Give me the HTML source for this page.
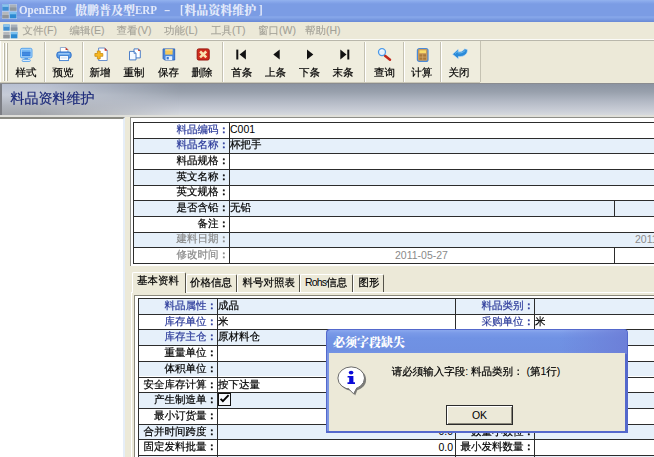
<!DOCTYPE html>
<html><head><meta charset="utf-8"><title>OpenERP</title>
<style>
html,body{margin:0;padding:0;}
body{width:654px;height:457px;overflow:hidden;background:#ece9d8;position:relative;font-family:"Liberation Sans", "WenQuanYi Zen Hei", "Noto Sans CJK SC", sans-serif;font-size:10.5px;color:#000;-webkit-text-stroke:0.2px currentColor;}
div,span{position:absolute;box-sizing:border-box;white-space:nowrap;}
.t{line-height:12px;}
.req{color:#2b3a9a;} .dis{color:#8a8a8a;}
.lab{text-align:right;}
.lat{-webkit-text-stroke:0;font-size:10.5px;}
.hl{background:#2c2c2c;height:1px;}
.vl{background:#2c2c2c;width:1px;}
.tb{font-size:10.5px;text-align:center;width:40px;top:65.5px;line-height:12px;}
.sep{top:42px;height:40px;width:2px;border-left:1px solid #c5c2b2;border-right:1px solid #fff;}
.mi{top:24px;color:#a3a197;-webkit-text-stroke:0.1px #a3a197;line-height:12px;font-size:10.5px;}
</style></head><body>

<div style="left:0;top:0;width:654px;height:21.5px;background:linear-gradient(#93b2ee 0,#86a6ea 2px,#7b9ce4 4px,#7b9ce4 15.5px,#88a8ea 17px,#7e9fe4 18.5px,#6c8cd8 21.5px);"></div>
<div style="left:18.8px;top:3.2px;color:#e2e9fa;font-weight:bold;font-family:'Liberation Serif','Noto Serif CJK SC',serif;-webkit-text-stroke:0;font-size:12px;line-height:14px;transform:scaleX(0.92);transform-origin:0 0;">OpenERP</div>
<div style="left:75.0px;top:4px;color:#e2e9fa;font-weight:bold;font-family:'Liberation Serif','Noto Serif CJK SC',serif;-webkit-text-stroke:0;font-size:12px;line-height:14px;font-weight:900;">傲鹏普及型</div>
<div style="left:135.4px;top:3.2px;color:#e2e9fa;font-weight:bold;font-family:'Liberation Serif','Noto Serif CJK SC',serif;-webkit-text-stroke:0;font-size:12px;line-height:14px;transform:scaleX(0.92);transform-origin:0 0;">ERP</div>
<div style="left:164.2px;top:3.2px;color:#e2e9fa;font-weight:bold;font-family:'Liberation Serif','Noto Serif CJK SC',serif;-webkit-text-stroke:0;font-size:12px;line-height:14px;transform:scaleX(1.60);transform-origin:0 0;">-</div>
<div style="left:180.0px;top:3.2px;color:#e2e9fa;font-weight:bold;font-family:'Liberation Serif','Noto Serif CJK SC',serif;-webkit-text-stroke:0;font-size:12px;line-height:14px;transform:scaleX(0.92);transform-origin:0 0;">[</div>
<div style="left:184.3px;top:4px;color:#e2e9fa;font-weight:bold;font-family:'Liberation Serif','Noto Serif CJK SC',serif;-webkit-text-stroke:0;font-size:12px;line-height:14px;font-weight:900;">料品资料维护</div>
<div style="left:258.6px;top:3.2px;color:#e2e9fa;font-weight:bold;font-family:'Liberation Serif','Noto Serif CJK SC',serif;-webkit-text-stroke:0;font-size:12px;line-height:14px;transform:scaleX(0.92);transform-origin:0 0;">]</div>
<svg style="position:absolute;left:1.5px;top:3.5px" width="15" height="15" viewBox="0 0 15 15"><rect x="0" y="0" width="15" height="15" fill="#e8eef8" opacity="0.55"/><rect x="0.3" y="0.5" width="6.4" height="6.2" fill="#3f8fd2"/><rect x="0.3" y="0.5" width="6.4" height="2.4" fill="#8cc4ec"/><rect x="7.8" y="0.5" width="6.6" height="6.2" fill="#a9b1ba"/><rect x="7.8" y="3.4" width="6.600" height="3.300" fill="#8d969f"/><rect x="0.3" y="7.900" width="6.400" height="6.400" fill="#b4b8bc"/><rect x="0.3" y="11" width="6.400" height="3.300" fill="#8f9499"/><rect x="7.800" y="7.900" width="6.600" height="6.400" fill="#2c8ad2"/><rect x="7.800" y="7.900" width="6.600" height="2.400" fill="#7cc0ee"/></svg>
<div style="left:0;top:21.5px;width:654px;height:19px;background:#ece9d8;"></div>
<div style="left:0;top:38.5px;width:654px;height:1.2px;background:#fbfbf8;"></div>
<div style="left:0;top:39.7px;width:654px;height:0.9px;background:#b9b7ab;"></div>
<svg style="position:absolute;left:3.0px;top:24.0px" width="15" height="15" viewBox="0 0 15 15"><rect x="0" y="0" width="15" height="15" fill="#e8eef8" opacity="0.55"/><rect x="0.3" y="0.5" width="6.4" height="6.2" fill="#3f8fd2"/><rect x="0.3" y="0.5" width="6.4" height="2.4" fill="#8cc4ec"/><rect x="7.8" y="0.5" width="6.6" height="6.2" fill="#a9b1ba"/><rect x="7.8" y="3.4" width="6.600" height="3.300" fill="#8d969f"/><rect x="0.3" y="7.900" width="6.400" height="6.400" fill="#b4b8bc"/><rect x="0.3" y="11" width="6.400" height="3.300" fill="#8f9499"/><rect x="7.800" y="7.900" width="6.600" height="6.400" fill="#2c8ad2"/><rect x="7.800" y="7.900" width="6.600" height="2.400" fill="#7cc0ee"/></svg>
<div class="mi" style="left:22.5px">文件(F)</div>
<div class="mi" style="left:69.5px">编辑(E)</div>
<div class="mi" style="left:116.5px">查看(V)</div>
<div class="mi" style="left:164.0px">功能(L)</div>
<div class="mi" style="left:211.0px">工具(T)</div>
<div class="mi" style="left:258.0px">窗口(W)</div>
<div class="mi" style="left:305.0px">帮助(H)</div>
<div style="left:0;top:40.6px;width:654px;height:43px;background:#ece9d8;"></div>
<div style="left:0;top:40.6px;width:480.5px;height:41px;background:#efedde;border-right:1px solid #c5c2b2;"></div>
<div style="left:0;top:41px;width:1px;height:41px;background:#fdfdfb;"></div>
<div style="left:3px;top:42.5px;width:2px;height:38px;border-left:1px solid #fff;border-right:1px solid #b9b6a6;"></div>
<div style="left:6px;top:42.5px;width:2px;height:38px;border-left:1px solid #fff;border-right:1px solid #b9b6a6;"></div>
<div class="sep" style="left:44px"></div>
<div class="sep" style="left:82px"></div>
<div class="sep" style="left:222px"></div>
<div class="sep" style="left:364px"></div>
<div class="sep" style="left:403px"></div>
<div class="sep" style="left:440px"></div>
<div class="tb" style="left:6.0px">样式</div>
<div class="tb" style="left:43.0px">预览</div>
<div class="tb" style="left:80.0px">新增</div>
<div class="tb" style="left:114.0px">重制</div>
<div class="tb" style="left:148.4px">保存</div>
<div class="tb" style="left:182.0px">删除</div>
<div class="tb" style="left:221.7px">首条</div>
<div class="tb" style="left:255.6px">上条</div>
<div class="tb" style="left:289.6px">下条</div>
<div class="tb" style="left:323.0px">末条</div>
<div class="tb" style="left:364.5px">查询</div>
<div class="tb" style="left:401.8px">计算</div>
<div class="tb" style="left:439.0px">关闭</div>
<svg style="position:absolute;left:0;top:0" width="654" height="90" viewBox="0 0 654 90"><defs><linearGradient id="gs" x1="0" y1="0" x2="0" y2="1"><stop offset="0" stop-color="#7fc0f8"/><stop offset="1" stop-color="#2a78d8"/></linearGradient></defs><g transform="translate(20,47.8)"><rect x="0.5" y="0.5" width="11.5" height="9.6" rx="1.5" fill="#a8d4fa" stroke="#58a4ec"/><rect x="2" y="2" width="8.5" height="6.4" fill="url(#gs)"/><rect x="2" y="4.6" width="8.5" height="0.9" fill="#2a6fd0"/><rect x="4.5" y="10.300" width="3.500" height="1.600" fill="#4a90e0"/><rect x="2.200" y="11.800" width="8.100" height="1.900" rx="0.8" fill="#e4f0fc" stroke="#4a9ae8" stroke-width="0.8"/></g><g transform="translate(56.4,47)"><path d="M4 5.500 V0.500 H9.500 L11.500 2.500 V5.500Z" fill="#fff" stroke="#7a9cc8" stroke-width="0.8"/><path d="M9.200 0.300 L11.800 2.900 L9.200 2.900Z" fill="#c8301c"/><rect x="0.500" y="5" width="14.200" height="6.200" rx="2.200" fill="#5a9ee8" stroke="#2a6cc8"/><rect x="2" y="6.200" width="11" height="1.200" fill="#a8d0f8"/><rect x="3.200" y="8.600" width="8.800" height="5" fill="#fff" stroke="#3a7cd0" stroke-width="0.9"/><rect x="4.500" y="10.500" width="6" height="0.900" fill="#b8d4f0"/></g><g transform="translate(94.6,47.5)"><path d="M4 0.500 H10.300 L12.600 2.800 V13 H4Z" fill="#fff" stroke="#5a86c8" stroke-width="0.9"/><path d="M10 0.300 L12.900 3.200 L10 3.200Z" fill="#c8301c"/><path d="M2.800 3.500 H5.600 V6 H8.200 V8.800 H5.600 V11.400 H2.800 V8.800 H0.300 V6 H2.800Z" fill="#f8b820" stroke="#c88a10" stroke-width="0.8"/></g><g transform="translate(129,48.4)"><path d="M5 0.500 H9.500 L11.300 2.300 V9.500 H5Z" fill="#fff" stroke="#3a72c4" stroke-width="0.9"/><path d="M9.200 0.300 L11.600 2.700 L9.200 2.700Z" fill="#c8301c"/><path d="M0.500 3 H5 L7 5 V11.500 H0.500Z" fill="#f4f9ff" stroke="#3a72c4" stroke-width="0.9"/><path d="M5 3 V5 H7" fill="none" stroke="#3a72c4" stroke-width="0.7"/></g><g transform="translate(162.6,48.4)"><path d="M0.500 0.500 H12.100 V11.600 H2 L0.500 10.100Z" fill="#4a88dc" stroke="#2a5eb8" stroke-width="0.9"/><rect x="2.600" y="0.900" width="7.400" height="5.300" fill="#f4c85a"/><rect x="2.600" y="0.900" width="7.400" height="1.300" fill="#f8e098"/><rect x="3" y="7.800" width="6.600" height="3.800" fill="#e8f2ff"/><rect x="4" y="8.600" width="2.200" height="2.400" fill="#3a78d0"/></g><g transform="translate(196.7,48.4)"><rect x="0.500" y="0.500" width="12" height="11.100" rx="1.500" fill="#d02c1c" stroke="#98140c"/><path d="M3.400 3.100 L9.600 9 M9.600 3.100 L3.400 9" stroke="#fbe2b0" stroke-width="2.500"/></g><g fill="#111"><rect x="236.300" y="49.600" width="2" height="9.900"/><path d="M245.900 49.600 V59.500 L239.600 54.550Z"/><path d="M279.700 49.600 V59.500 L273.300 54.550Z"/><path d="M307 49.600 V59.500 L313.300 54.550Z"/><path d="M340.300 49.600 V59.500 L346.500 54.550Z"/><rect x="347.300" y="49.600" width="2" height="9.900"/></g><path d="M385 55.800 L390 59.800" stroke="#c0281c" stroke-width="2.500" stroke-linecap="round"/><circle cx="382" cy="52.100" r="3.500" fill="#e4f2fe" stroke="#4a98e8" stroke-width="1.300"/><path d="M380.200 51.200 A2.200 2.200 0 0 1 382.600 50" stroke="#fff" stroke-width="0.900" fill="none"/><g transform="translate(416.8,47.9)"><rect x="0.600" y="0.600" width="10.600" height="12.900" rx="2" fill="#c89a5c" stroke="#4a8ad8" stroke-width="1.200"/><rect x="2.600" y="2.400" width="6.600" height="2.800" fill="#f8dc68"/><rect x="2.600" y="6.400" width="2.800" height="5.400" fill="#a87838"/><rect x="6.400" y="6.400" width="2.800" height="5.400" fill="#a87838"/><rect x="2.600" y="8.800" width="6.600" height="0.700" fill="#d8b070"/></g><path d="M452.500 54.200 L458.200 49 L458.400 51.600 C460.500 52.200 463 51.200 464.600 48.800 L467.400 49.400 C468 53.600 464.400 57 458.400 56.600 L458.400 59Z" fill="#2a8ad8" stroke="#d4e6f6" stroke-width="0.600"/><path d="M455 53.600 L457.600 51.200 L458 52.800 C461 53.400 463.600 52.200 465.300 50.400" stroke="#6ab8f0" stroke-width="1" fill="none"/></svg>
<div style="left:0;top:81.5px;width:480px;height:1px;background:#cbc8b8;"></div>
<div style="left:0;top:82.5px;width:654px;height:2px;background:#8a8c90;"></div>
<div style="left:0;top:84px;width:654px;height:30.5px;background:linear-gradient(#8c94a2,#98a0ac 25%,#b2b8c4 55%,#cbcfd8 88%,#d6d9dd);"></div>
<div style="left:0;top:84px;width:190px;height:30.5px;background:linear-gradient(#b8c0d2,#c6ccd8 35%,#b0b4bc 70%,#a2a5aa);-webkit-mask-image:linear-gradient(to right,#000 0,#000 40px,transparent 180px);mask-image:linear-gradient(to right,#000 0,#000 40px,transparent 180px);"></div>
<div style="left:0;top:84px;width:1.5px;height:31px;background:#7c7e84;"></div>
<div style="left:0;top:114.5px;width:654px;height:2.5px;background:#dfdfda;"></div>
<div style="left:10.5px;top:90px;color:#1c2a7a;font-size:14px;line-height:17px;-webkit-text-stroke:0.2px #1c2a7a;">料品资料维护</div>
<div style="left:0;top:116.5px;width:124.8px;height:341px;background:#fff;border-top:2px solid #8a8a82;border-right:2px solid #e6eef8;"></div>
<div style="left:130px;top:117px;width:530px;height:148.800px;border-left:1.5px solid #8e8e88;border-top:1.5px solid #8e8e88;background:#fff;"></div>
<div style="left:133px;top:122.00px;width:530px;height:15.67px;background:#fff;"></div>
<div class="t lab req" style="left:133px;width:96px;top:122.80px;">料品编码<span style="position:static;-webkit-text-stroke:0.55px currentColor">：</span></div>
<div class="t lat" style="left:230px;top:122.80px;">C001</div>
<div style="left:133px;top:137.67px;width:530px;height:15.67px;background:#e6f0fa;"></div>
<div class="t lab req" style="left:133px;width:96px;top:138.47px;">料品名称<span style="position:static;-webkit-text-stroke:0.55px currentColor">：</span></div>
<div class="t" style="left:230px;top:138.47px;">杯把手</div>
<div style="left:133px;top:153.33px;width:530px;height:15.67px;background:#fff;"></div>
<div class="t lab " style="left:133px;width:96px;top:154.13px;">料品规格<span style="position:static;-webkit-text-stroke:0.55px currentColor">：</span></div>
<div style="left:133px;top:169.00px;width:530px;height:15.67px;background:#e6f0fa;"></div>
<div class="t lab " style="left:133px;width:96px;top:169.80px;">英文名称<span style="position:static;-webkit-text-stroke:0.55px currentColor">：</span></div>
<div style="left:133px;top:184.67px;width:530px;height:15.67px;background:#fff;"></div>
<div class="t lab " style="left:133px;width:96px;top:185.47px;">英文规格<span style="position:static;-webkit-text-stroke:0.55px currentColor">：</span></div>
<div style="left:133px;top:200.33px;width:530px;height:15.67px;background:#e6f0fa;"></div>
<div class="t lab " style="left:133px;width:96px;top:201.13px;">是否含铅<span style="position:static;-webkit-text-stroke:0.55px currentColor">：</span></div>
<div class="t" style="left:230px;top:201.13px;">无铅</div>
<div style="left:133px;top:216.00px;width:530px;height:15.67px;background:#fff;"></div>
<div class="t lab " style="left:133px;width:96px;top:216.80px;">备注<span style="position:static;-webkit-text-stroke:0.55px currentColor">：</span></div>
<div style="left:133px;top:231.67px;width:530px;height:15.67px;background:#e6f0fa;"></div>
<div class="t lab dis" style="left:133px;width:96px;top:232.47px;">建料日期<span style="position:static;-webkit-text-stroke:0.55px currentColor">：</span></div>
<div style="left:133px;top:247.34px;width:530px;height:15.67px;background:#fff;"></div>
<div class="t lab dis" style="left:133px;width:96px;top:248.14px;">修改时间<span style="position:static;-webkit-text-stroke:0.55px currentColor">：</span></div>
<div class="hl" style="left:133px;width:530px;top:122.00px"></div>
<div class="hl" style="left:133px;width:530px;top:137.67px"></div>
<div class="hl" style="left:133px;width:530px;top:153.33px"></div>
<div class="hl" style="left:133px;width:530px;top:169.00px"></div>
<div class="hl" style="left:133px;width:530px;top:184.67px"></div>
<div class="hl" style="left:133px;width:530px;top:200.33px"></div>
<div class="hl" style="left:133px;width:530px;top:216.00px"></div>
<div class="hl" style="left:133px;width:530px;top:231.67px"></div>
<div class="hl" style="left:133px;width:530px;top:247.34px"></div>
<div class="hl" style="left:133px;width:530px;top:263.00px"></div>
<div class="vl" style="left:133px;top:122px;height:142.00px"></div>
<div class="vl" style="left:229px;top:122px;height:142.00px"></div>
<div class="vl" style="left:614px;top:200.33px;height:15.67px"></div>
<div class="vl" style="left:614px;top:247.34px;height:15.67px"></div>
<div class="t dis lat" style="left:229px;width:385px;text-align:center;top:248.54px;">2011-05-27</div>
<div class="t dis lat" style="left:635px;top:232.87px;">2011-05-27</div>
<div style="left:130.500px;top:291.500px;width:530px;height:170px;border-top:1px solid #fff;border-left:1px solid #fff;"></div>
<div style="left:132px;top:272px;width:54px;height:21px;background:#ece9d8;border-left:1px solid #fff;border-top:1px solid #fff;border-right:1px solid #55534a;border-radius:2px 2px 0 0;"></div>
<div class="t" style="left:137px;top:274px;">基本资料</div>
<div style="left:186.0px;top:274px;width:51.0px;height:18px;border-left:1px solid #fff;border-top:1px solid #fff;border-right:1px solid #55534a;border-radius:2px 2px 0 0;"></div>
<div class="t" style="left:190.0px;top:275.5px;">价格信息</div>
<div style="left:237.0px;top:274px;width:63.0px;height:18px;border-left:1px solid #fff;border-top:1px solid #fff;border-right:1px solid #55534a;border-radius:2px 2px 0 0;"></div>
<div class="t" style="left:242.5px;top:275.5px;">料号对照表</div>
<div style="left:300.0px;top:274px;width:53.0px;height:18px;border-left:1px solid #fff;border-top:1px solid #fff;border-right:1px solid #55534a;border-radius:2px 2px 0 0;"></div>
<div class="t" style="left:305.0px;top:275.5px;"><span class="lat" style="position:static;letter-spacing:-0.8px">Rohs</span>信息</div>
<div style="left:353.0px;top:274px;width:30.5px;height:18px;border-left:1px solid #fff;border-top:1px solid #fff;border-right:1px solid #55534a;border-radius:2px 2px 0 0;"></div>
<div class="t" style="left:358.5px;top:275.5px;">图形</div>
<div style="left:134px;top:295px;width:530px;height:170px;border-left:1px solid #8a887c;border-top:1px solid #8a887c;background:#fff;"></div>
<div style="left:138px;top:298.00px;width:530px;height:15.70px;background:#e6f0fa;"></div>
<div class="t lab req" style="left:138px;width:79px;top:299.00px;">料品属性<span style="position:static;-webkit-text-stroke:0.55px currentColor">：</span></div>
<div class="t" style="left:218px;top:299.00px;">成品</div>
<div class="t lab req" style="left:455px;width:79px;top:299.00px;">料品类别<span style="position:static;-webkit-text-stroke:0.55px currentColor">：</span></div>
<div style="left:138px;top:313.70px;width:530px;height:15.70px;background:#fff;"></div>
<div class="t lab req" style="left:138px;width:79px;top:314.70px;">库存单位<span style="position:static;-webkit-text-stroke:0.55px currentColor">：</span></div>
<div class="t" style="left:218px;top:314.70px;">米</div>
<div class="t lab req" style="left:455px;width:79px;top:314.70px;">采购单位<span style="position:static;-webkit-text-stroke:0.55px currentColor">：</span></div>
<div class="t" style="left:535px;top:314.70px;">米</div>
<div style="left:138px;top:329.40px;width:530px;height:15.70px;background:#e6f0fa;"></div>
<div class="t lab req" style="left:138px;width:79px;top:330.40px;">库存主仓<span style="position:static;-webkit-text-stroke:0.55px currentColor">：</span></div>
<div class="t" style="left:218px;top:330.40px;">原材料仓</div>
<div style="left:138px;top:345.10px;width:530px;height:15.70px;background:#fff;"></div>
<div class="t lab " style="left:138px;width:79px;top:346.10px;">重量单位<span style="position:static;-webkit-text-stroke:0.55px currentColor">：</span></div>
<div style="left:138px;top:360.80px;width:530px;height:15.70px;background:#e6f0fa;"></div>
<div class="t lab " style="left:138px;width:79px;top:361.80px;">体积单位<span style="position:static;-webkit-text-stroke:0.55px currentColor">：</span></div>
<div style="left:138px;top:376.50px;width:530px;height:15.70px;background:#fff;"></div>
<div class="t lab " style="left:138px;width:79px;top:377.50px;">安全库存计算<span style="position:static;-webkit-text-stroke:0.55px currentColor">：</span></div>
<div class="t" style="left:218px;top:377.50px;">按下达量</div>
<div style="left:138px;top:392.20px;width:530px;height:15.70px;background:#e6f0fa;"></div>
<div class="t lab " style="left:138px;width:79px;top:393.20px;">产生制造单<span style="position:static;-webkit-text-stroke:0.55px currentColor">：</span></div>
<div style="left:138px;top:407.90px;width:530px;height:15.70px;background:#fff;"></div>
<div class="t lab " style="left:138px;width:79px;top:408.90px;">最小订货量<span style="position:static;-webkit-text-stroke:0.55px currentColor">：</span></div>
<div style="left:138px;top:423.60px;width:530px;height:15.70px;background:#e6f0fa;"></div>
<div class="t lab " style="left:138px;width:79px;top:424.60px;">合并时间跨度<span style="position:static;-webkit-text-stroke:0.55px currentColor">：</span></div>
<div class="t lab " style="left:455px;width:79px;top:424.60px;">数量小数位<span style="position:static;-webkit-text-stroke:0.55px currentColor">：</span></div>
<div style="left:138px;top:439.30px;width:530px;height:15.70px;background:#fff;"></div>
<div class="t lab " style="left:138px;width:79px;top:440.30px;">固定发料批量<span style="position:static;-webkit-text-stroke:0.55px currentColor">：</span></div>
<div class="t lab " style="left:455px;width:79px;top:440.30px;">最小发料数量<span style="position:static;-webkit-text-stroke:0.55px currentColor">：</span></div>
<div style="left:138px;top:455.00px;width:530px;height:15.70px;background:#e6f0fa;"></div>
<div class="hl" style="left:138px;width:530px;top:298.00px"></div>
<div class="hl" style="left:138px;width:530px;top:313.70px"></div>
<div class="hl" style="left:138px;width:530px;top:329.40px"></div>
<div class="hl" style="left:138px;width:530px;top:345.10px"></div>
<div class="hl" style="left:138px;width:530px;top:360.80px"></div>
<div class="hl" style="left:138px;width:530px;top:376.50px"></div>
<div class="hl" style="left:138px;width:530px;top:392.20px"></div>
<div class="hl" style="left:138px;width:530px;top:407.90px"></div>
<div class="hl" style="left:138px;width:530px;top:423.60px"></div>
<div class="hl" style="left:138px;width:530px;top:439.30px"></div>
<div class="hl" style="left:138px;width:530px;top:455.00px"></div>
<div class="hl" style="left:138px;width:530px;top:470.70px"></div>
<div class="vl" style="left:138.0px;top:298px;height:170px"></div>
<div class="vl" style="left:217.0px;top:298px;height:170px"></div>
<div class="vl" style="left:454.5px;top:298px;height:170px"></div>
<div class="vl" style="left:534.0px;top:298px;height:170px"></div>
<div style="left:217.5px;top:392.80px;width:13.2px;height:13px;border:1px solid #111;background:#f6f9fd;"></div>
<svg style="position:absolute;left:217px;top:392.20px" width="16" height="16" viewBox="0 0 16 16"><path d="M3.600 6.800 L5.900 9.200 L11.600 3.100" stroke="#000" stroke-width="1.9" fill="none"/></svg>
<div class="t" style="left:380px;width:73px;text-align:right;top:424.80px;-webkit-text-stroke:0;font-size:10.5px">0.0</div>
<div class="t" style="left:380px;width:73px;text-align:right;top:440.50px;-webkit-text-stroke:0;font-size:10.5px">0.0</div>
<div style="left:326px;top:329px;width:301.8px;height:104.1px;background:#5468cc;border-radius:4px 4px 0 0;"></div>
<div style="left:327px;top:329.8px;width:299.8px;height:24px;background:linear-gradient(#8aa8ee 0,#7a9ae8 3px,#7092e4 8px,#6f90e2 20px,#7694e4 24px);border-radius:3.5px 3.5px 0 0;"></div>
<div style="left:560px;top:329.8px;width:66.8px;height:24px;background:linear-gradient(to right,rgba(108,124,214,0),rgba(108,124,214,0.85));border-radius:0 3.5px 0 0;"></div>
<div style="left:327px;top:353.3px;width:1.7px;height:77.4px;background:#7c96e2;"></div>
<div style="left:328.7px;top:353.3px;width:296.6px;height:77.3px;background:#ece9d8;"></div>
<div style="left:333px;top:335.5px;color:#fff;font:bold 12px/14px 'Liberation Serif','Noto Serif CJK SC',serif;font-weight:900;-webkit-text-stroke:0;">必须字段缺失</div>
<div class="t" style="left:391.7px;top:364.8px;">请必须输入字段<span class="lat" style="position:static">: </span>料品类别： <span class="lat" style="position:static">(</span>第<span class="lat" style="position:static">1</span>行<span class="lat" style="position:static">)</span></div>
<div style="left:446px;top:405px;width:66.8px;height:20px;background:#ece9d8;border:1px solid #2c2c2c;box-shadow:inset 1px 1px 0 #fff, inset -1px -1px 0 #8a887c;"></div>
<div class="t lat" style="left:446px;width:67px;text-align:center;top:409px;">OK</div>
<svg style="position:absolute;left:330px;top:355px" width="50" height="45" viewBox="330 355 50 45"><g transform="translate(1.6,1.6)" fill="#7c7c78"><ellipse cx="351.2" cy="378.1" rx="13.3" ry="11.2"/><path d="M348.5 387.500 L353.600 393.800 L356.500 386.500Z"/></g><g fill="#fff" stroke="#6a6a6a" stroke-width="1"><ellipse cx="351.200" cy="378.100" rx="13.300" ry="11.200"/><path d="M348 388.300 L353.600 393.800 L356.800 387.800"/></g><path d="M348.400 387.200 L353.500 392.400 L356.400 386.800Z" fill="#fff"/><ellipse cx="351.100" cy="372.600" rx="2.300" ry="1.900" fill="#0a0ad8"/><path d="M347.600 376.100 H353.400 V382.300 H355 V383.900 H347.500 V382.300 H349.200 V377.600 H347.600Z" fill="#0a0ad8"/></svg>
</body></html>
